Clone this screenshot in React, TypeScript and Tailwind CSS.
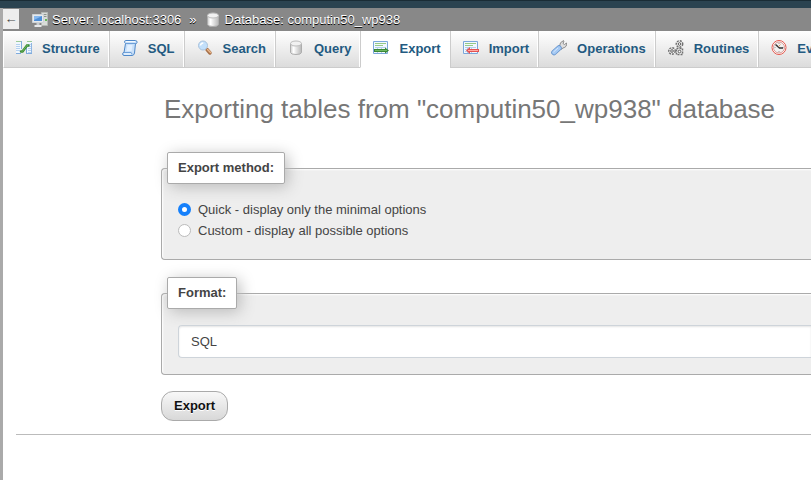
import React, { useState } from "react";
import classNames from "clsx";

const StructureIcon = () => (
  <svg width="16" height="16" viewBox="0 0 16 16" className="shrink-0">
    <path d="M0 1h5v13H0zM11 1h5v13h-5z" fill="#f1f7fe" />
    <path d="M0 1.5h5M11 1.5h5" stroke="#9ccb98" />
    <path
      d="M0 4.5h4M0 6.5h4M0 8.5h4M0 10.5h4M12 4.5h3M12 6.5h3M12 8.5h3M12 10.5h3M12 12.5h3"
      stroke="#b4d0ee"
    />
    <path d="M5.5 1v8M0 13.5h5M10.5 7v7M11 13.5h5" fill="none" stroke="#7fabdd" />
    <path d="M15.5 3v10" stroke="#8fb6e2" />
    <path
      d="M5 11.5h1.500L11 5.500h1.500"
      fill="none"
      stroke="#3b8a34"
      strokeWidth="2.500"
      strokeLinecap="round"
    />
    <path d="M5.500 11.300h1L11 5.300h1" fill="none" stroke="#6dba5f" />
  </svg>
);

const SqlIcon = () => (
  <svg width="16" height="16" viewBox="0 0 16 16" className="shrink-0">
    <path
      d="M3.500.500h10q2 .3 1.500 2.200q-.400 1.200-1.500.800L12.500 13q-.500 2.500-2.500 2.500H2Q.400 15.300.600 13.500q.200-1 1.400-1L3.500 3.500Q2.200 2.600 2.600 1.300 2.800.600 3.500.500z"
      fill="#c9e0f9"
      stroke="#4e88c9"
    />
    <path d="M4 3.500h9M2 12.500h7q1 .200.800 1.800" fill="none" stroke="#6d9fd8" />
    <path d="M5.500 5h5l-1 6H4.500z" fill="#e2f0ff" />
    <path d="M4 1.500h9M2 14h7" stroke="#f4faff" />
  </svg>
);

const SearchIcon = () => (
  <svg width="16" height="16" viewBox="0 0 16 16" className="shrink-0">
    <path d="M10 9.500l3 3.500" stroke="#a8714a" strokeWidth="3.500" strokeLinecap="round" />
    <path d="M10.500 9.500l3 3" stroke="#eab88c" strokeWidth="1.500" strokeLinecap="round" />
    <circle cx="6" cy="5.500" r="4.500" fill="#c3e0fb" stroke="#a9c2dc" />
    <path d="M3.500 5.500q.200-2.300 2.800-2.500" fill="none" stroke="#fff" strokeWidth="1.500" />
  </svg>
);

const DatabaseIcon = () => (
  <svg width="16" height="16" viewBox="0 0 16 16" className="shrink-0">
    <defs>
      <linearGradient id="cylinder">
        <stop offset="0" stopColor="#cfcfcf" />
        <stop offset=".3" stopColor="#fbfbfb" />
        <stop offset=".6" stopColor="#dedede" />
        <stop offset="1" stopColor="#b8b8b8" />
      </linearGradient>
    </defs>
    <path
      d="M2.500 3.500v9q.300 2 5.500 2t5.500-2v-9z"
      fill="url(#cylinder)"
      stroke="#adadad"
    />
    <ellipse cx="8" cy="3.500" rx="5.500" ry="2.500" fill="#f1f1f1" stroke="#bdbdbd" />
    <path d="M5.500 7v6" stroke="#fff" strokeWidth="1.500" />
  </svg>
);

const SheetLines = () => (
  <>
    <path d="M.500 1.500h14v12H.500z" fill="#f2f8ff" stroke="#7ba7da" />
    <path d="M2 3.500h11M2 5.500h8" stroke="#94ca87" />
    <path d="M2 7.500h11M2 9.500h11M2 11.500h11M4.500 7v6M8.500 7v6" stroke="#b4cfec" />
  </>
);

const ExportIcon = () => (
  <svg width="16" height="16" viewBox="0 0 16 16" className="shrink-0">
    <SheetLines />
    <path d="M1 9h11V7.500l4 3-4 3V12H1z" fill="#3a8836" />
    <path d="M2 10.500h12" stroke="#6fb963" />
  </svg>
);

const ImportIcon = () => (
  <svg width="16" height="16" viewBox="0 0 16 16" className="shrink-0">
    <SheetLines />
    <path d="M16 9H7V7l-4 3.500L7 14v-2h9z" fill="#e45252" />
    <path d="M5 10.500h10" stroke="#ffaaa4" />
  </svg>
);

const WrenchIcon = () => (
  <svg width="16" height="16" viewBox="0 0 16 16" className="shrink-0">
    <path
      d="M8.500 6.500Q8.500 2 12.500.600L13 1l-1 2.500 1.500 1L15.500 3q.800 4-3.500 5l-2 1.500-2-1.500z"
      fill="#dedede"
      stroke="#8d8d8d"
    />
    <path d="M3 12.500l5-4.500" stroke="#6392cc" strokeWidth="5.500" strokeLinecap="round" />
    <path d="M3 12.500l5-4.500" stroke="#a6caf4" strokeWidth="4" strokeLinecap="round" />
    <path d="M2.500 12l4.500-4" stroke="#d4e7fd" />
  </svg>
);

const GearsIcon = () => (
  <svg width="16" height="16" viewBox="0 0 16 16" className="shrink-0">
    <g fill="#f4f4f4" stroke="#707070" strokeWidth="1.500" strokeDasharray="2 1">
      <circle cx="11.500" cy="4" r="3.200" />
      <circle cx="4" cy="11" r="3.200" />
      <path d="M8.500 8.500h6v6h-6z" />
    </g>
    <g fill="#fff" stroke="#5a5a5a">
      <circle cx="11.500" cy="4" r="1.300" />
      <circle cx="4" cy="11" r="1.300" />
      <circle cx="11.500" cy="11.500" r="1.300" />
    </g>
  </svg>
);

const ClockIcon = () => (
  <svg width="16" height="16" viewBox="0 0 16 16" className="shrink-0">
    <circle cx="8" cy="7.500" r="7" fill="#fff" stroke="#e4574d" />
    <circle cx="8" cy="7.500" r="5.500" fill="#f1f1f1" stroke="#d99b95" />
    <path d="M8 3v1M8 11v1M3.500 7.500h1M11.500 7.500h1" stroke="#999" />
    <path d="M4.500 4.500L8.500 8H12" fill="none" stroke="#333" strokeWidth="1.500" />
    <path d="M7.500 6.500L9.500 4.500" stroke="#e59a6b" />
  </svg>
);

const ServerIcon = () => (
  <svg width="16" height="16" viewBox="0 0 16 16" className="shrink-0">
    <path d="M9.500.500h6v13h-6z" fill="#d9dcd9" stroke="#b4b8b4" />
    <path d="M11 2.500h3.500M11 4.500h3.500" stroke="#8c948c" />
    <path d="M13 7h2v2h-2z" fill="#66b65c" />
    <path d="M.500 2.500h11v8H.500z" fill="#e6e9ec" stroke="#cdd2d6" />
    <path d="M2 4h8v5H2z" fill="#4e8fd8" />
    <path d="M2 4h8L2 8z" fill="#86b8ee" />
    <path d="M4.500 11h3v2h-3z" fill="#c9cdd0" />
    <path d="M2.500 14h7" stroke="#e8eaec" strokeWidth="2" />
  </svg>
);

const tabs = [
  { label: "Structure", Icon: StructureIcon },
  { label: "SQL", Icon: SqlIcon },
  { label: "Search", Icon: SearchIcon },
  { label: "Query", Icon: DatabaseIcon },
  { label: "Export", Icon: ExportIcon },
  { label: "Import", Icon: ImportIcon },
  { label: "Operations", Icon: WrenchIcon },
  { label: "Routines", Icon: GearsIcon },
  { label: "Events", Icon: ClockIcon },
];

const methods = [
  { value: "quick", label: "Quick - display only the minimal options" },
  { value: "custom", label: "Custom - display all possible options" },
];

const fieldsetStyle = classNames(
  "rounded-l",
  "border",
  "border-r-0",
  "border-[#aaa]",
  "bg-[#eee]",
  "pl-[5px]",
  "shadow-[inset_1px_1px_2px_#fff]"
);

const legendStyle = classNames(
  "rounded-xs",
  "border",
  "border-[#aaa]",
  "bg-white",
  "px-[10px]",
  "py-[5px]",
  "font-bold",
  "leading-5",
  "shadow-[3px_3px_15px_#bbb]"
);

const App = () => {
  const [method, setMethod] = useState("quick");
  const [format, setFormat] = useState("sql");

  return (
    <div className="flex min-h-screen flex-col overflow-hidden bg-white font-['Liberation_Sans',Arial,sans-serif] text-[13px] text-[#444]">
      {/* browser edge */}
      <div className="h-2 border-t border-[#1a2c35] bg-[#2b4350]" />
      <div className="grow border-l-[3px] border-[#aaa]">
        {/* breadcrumb */}
        <header className="flex h-[23px] items-center bg-[#888] text-white [text-shadow:0_1px_0_#000]">
          <button
            type="button"
            aria-label="Hide panel"
            className="mt-px mr-[13px] h-5 w-4 self-start bg-[#eee] text-center leading-5 text-[#444] [text-shadow:none]"
          >
            ←
          </button>
          <ServerIcon />
          <a href="#server" className="ml-1">
            Server: localhost:3306
          </a>
          <span className="mx-2">»</span>
          <DatabaseIcon />
          <a href="#database" className="ml-1">
            Database: computin50_wp938
          </a>
        </header>
        {/* tabs */}
        <nav>
          <ul className="flex overflow-hidden">
            {tabs.map(({ label, Icon }) => (
              <li key={label} className="group shrink-0">
                <a
                  href={`#${label.toLowerCase()}`}
                  className={classNames(
                    "flex h-[37px] items-start border-b border-l border-l-[#ccc] pt-[9px] pr-[9px] pl-3 font-bold text-[#235a81] group-first:border-l-white",
                    label === "Export"
                      ? "border-b-white bg-white"
                      : "border-b-[#ccc] bg-linear-to-b from-white to-[#dcdcdc] shadow-[inset_-1px_0_0_#fff]"
                  )}
                >
                  <Icon />
                  <span className="ml-[10px] leading-[18px]">{label}</span>
                </a>
              </li>
            ))}
          </ul>
        </nav>
        <main className="pl-[13px]">
          <form
            className="border-b border-[#bbb] pb-[13px] pl-[145px]"
            onSubmit={(e) => e.preventDefault()}
          >
            <h1 className="pt-6 pb-[25px] pl-[3px] text-[26px] leading-[35px] whitespace-nowrap text-[#777]">
              Exporting tables from "computin50_wp938" database
            </h1>
            <fieldset className={fieldsetStyle}>
              <legend className={legendStyle}>Export method:</legend>
              <div className="px-[11px] pt-[15px] pb-[18px]">
                {methods.map(({ value, label }) => (
                  <div key={value} className="flex h-[21px] items-center">
                    <input
                      type="radio"
                      id={value}
                      name="method"
                      value={value}
                      checked={method === value}
                      onChange={() => setMethod(value)}
                      className="size-[13px] appearance-none rounded-full border border-[#bbb] bg-white checked:border-4 checked:border-[#1580fb]"
                    />
                    <label htmlFor={value} className="pl-[7px]">
                      {label}
                    </label>
                  </div>
                ))}
              </div>
            </fieldset>
            <fieldset className={classNames(fieldsetStyle, "mt-[17px]")}>
              <legend className={legendStyle}>Format:</legend>
              <div className="pt-4 pb-4 pl-[11px]">
                <select
                  aria-label="Format"
                  value={format}
                  onChange={(e) => setFormat(e.target.value)}
                  className="block h-[33px] w-full appearance-none rounded-l border border-r-0 border-[#ced4da] bg-white px-3 shadow-[inset_0_1px_2px_#e4e4e4]"
                >
                  <option value="sql">SQL</option>
                  <option value="csv">CSV</option>
                  <option value="json">JSON</option>
                </select>
              </div>
            </fieldset>
            <button
              type="submit"
              className="mt-4 block h-[30px] rounded-xl border border-[#aaa] bg-linear-to-b from-[#f8f8f8] to-[#d8d8d8] px-3 font-bold text-[#111] [text-shadow:0_1px_0_#fff]"
            >
              Export
            </button>
          </form>
        </main>
      </div>
    </div>
  );
};
export default App;
